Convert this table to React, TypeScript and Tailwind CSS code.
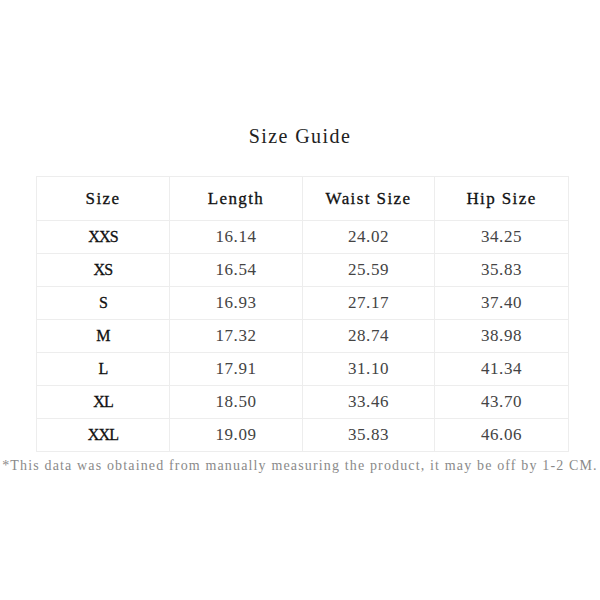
import React from "react";

const rows = [
  ["XXS", "16.14", "24.02", "34.25"],
  ["XS", "16.54", "25.59", "35.83"],
  ["S", "16.93", "27.17", "37.40"],
  ["M", "17.32", "28.74", "38.98"],
  ["L", "17.91", "31.10", "41.34"],
  ["XL", "18.50", "33.46", "43.70"],
  ["XXL", "19.09", "35.83", "46.06"],
];

const headers = ["Size", "Length", "Waist Size", "Hip Size"];

export default function App() {
  return (
    <div
      className="w-[600px] h-[600px] bg-white flex flex-col"
      style={{ fontFamily: '"Liberation Serif", serif' }}
    >
      <div className="pt-[124px] h-[148px] text-center text-[20px] leading-[24px] tracking-[1.4px] text-[#222]">
        Size Guide
      </div>
      <div className="mt-[28px] ml-[36px]">
        <table className="border-collapse table-fixed w-[532px]">
          <colgroup>
            <col className="w-[133px]" />
            <col className="w-[133px]" />
            <col className="w-[132px]" />
            <col className="w-[134px]" />
          </colgroup>
          <thead>
            <tr className="h-[44px]">
              {headers.map((h) => (
                <th
                  key={h}
                  className="border border-[#ededed] text-center font-normal text-[17px] tracking-[1.4px] text-[#111] p-0"
                  style={{ WebkitTextStroke: "0.3px #111" }}
                >
                  {h}
                </th>
              ))}
            </tr>
          </thead>
          <tbody>
            {rows.map((r) => (
              <tr key={r[0]} className="h-[33px]">
                {r.map((c, i) =>
                  i === 0 ? (
                    <td
                      key={i}
                      className="border border-[#ededed] text-center p-0 text-[16px] tracking-[-0.8px] text-[#111]"
                      style={{ WebkitTextStroke: "0.3px #111" }}
                    >
                      {c}
                    </td>
                  ) : (
                    <td
                      key={i}
                      className="border border-[#ededed] text-center p-0 text-[17px] tracking-[0.6px] text-[#444]"
                    >
                      {c}
                    </td>
                  )
                )}
              </tr>
            ))}
          </tbody>
        </table>
      </div>
      <div className="mt-[6px] text-center text-[14px] leading-[16px] tracking-[1.15px] text-[#8a8a8a] whitespace-nowrap">
        *This data was obtained from manually measuring the product, it may be off by 1-2 CM.
      </div>
    </div>
  );
}
